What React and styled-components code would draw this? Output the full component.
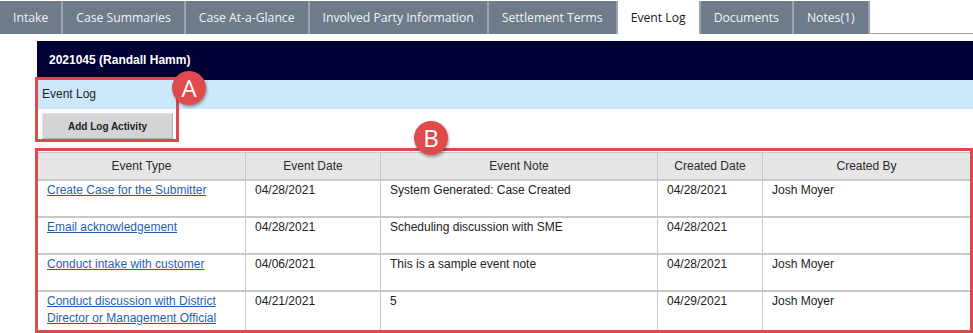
import React from 'react';
import styled, { createGlobalStyle } from 'styled-components';

const GlobalStyle = createGlobalStyle`
  body {
    margin: 0;
    background: #fff;
    font-family: "Liberation Sans", Arial, sans-serif;
  }
`;

const Page = styled.div`
  position: relative;
  width: 973px;
  height: 333px;
  overflow: hidden;
`;

const TabBar = styled.div`
  display: flex;
  height: 33px;
  border-bottom: 1px solid #a3a3a3;
`;

const Tab = styled.div`
  display: flex;
  align-items: center;
  justify-content: center;
  padding: 0 13px;
  margin-top: 1px;
  margin-bottom: -1px;
  border-right: 2px solid #9aa3ae;
  background: ${({ active }) => (active ? '#fff' : '#6e7b8b')};
  color: ${({ active }) => (active ? '#1a1a1a' : '#f1f3f5')};
  font-family: "Open Sans", "Noto Sans", sans-serif;
  font-size: 12.2px;
  white-space: nowrap;
`;

const Content = styled.div`
  padding: 7px 0 0 37px;
`;

const CaseHeader = styled.div`
  height: 39px;
  line-height: 39px;
  padding-left: 12px;
  background: #000034;
  color: #fff;
  font-weight: bold;
  font-size: 12px;
`;

const SectionBar = styled.div`
  height: 29px;
  line-height: 28px;
  padding-left: 5px;
  background: #cce9fb;
  color: #222;
  font-size: 12px;
`;

const ButtonRow = styled.div`
  padding: 4px 0 0 5px;
`;

const Button = styled.button`
  width: 131px;
  height: 26px;
  background: #d4d4d4;
  border: 1px solid #b5b5b5;
  border-top-color: #e2e2e2;
  border-left-color: #e2e2e2;
  font-family: "Liberation Sans", Arial, sans-serif;
  font-weight: bold;
  font-size: 10px;
  color: #222;
`;

const Table = styled.table`
  margin-top: 13px;
  width: 933px;
  border-collapse: collapse;
  table-layout: fixed;
  font-size: 12px;
  color: #222;
`;

const Th = styled.th`
  height: 26px;
  background: #e6e6e6;
  border: 1px solid #c8c8c8;
  font-weight: normal;
  color: #2a2a2a;
  text-align: center;
  padding: 0;
`;

const Td = styled.td`
  height: ${({ tall }) => (tall ? '38px' : '34px')};
  border-left: 1px solid #c8c8c8;
  border-right: 1px solid #c8c8c8;
  border-top: 2px solid #c8c8c8;
  vertical-align: top;
  padding: 1px 9px 0;
  line-height: 17px;
`;

const Link = styled.a`
  color: #1f5fb0;
  text-decoration: underline;
`;

const Marker = styled.div`
  position: absolute;
  left: ${({ x }) => x}px;
  top: ${({ y }) => y}px;
  width: ${({ w }) => w}px;
  height: ${({ h }) => h}px;
  border: 3px solid #dc4a4e;
  box-sizing: border-box;
  pointer-events: none;
`;

const Badge = styled.div`
  position: absolute;
  left: ${({ x }) => x - 17}px;
  top: ${({ y }) => y - 17}px;
  width: 34px;
  height: 34px;
  border-radius: 50%;
  background: #df4a4c;
  box-shadow: 1px 2px 3px rgba(0, 0, 0, 0.35);
  color: #fff;
  font-family: "Open Sans", "Noto Sans", sans-serif;
  font-size: 24px;
  line-height: 34px;
  text-align: center;
`;

const tabs = [
  'Intake',
  'Case Summaries',
  'Case At-a-Glance',
  'Involved Party Information',
  'Settlement Terms',
  'Event Log',
  'Documents',
  'Notes(1)',
];

const columns = [
  { title: 'Event Type', width: 208 },
  { title: 'Event Date', width: 135 },
  { title: 'Event Note', width: 277 },
  { title: 'Created Date', width: 105 },
  { title: 'Created By', width: 208 },
];

const rows = [
  ['Create Case for the Submitter', '04/28/2021', 'System Generated: Case Created', '04/28/2021', 'Josh Moyer'],
  ['Email acknowledgement', '04/28/2021', 'Scheduling discussion with SME', '04/28/2021', ''],
  ['Conduct intake with customer', '04/06/2021', 'This is a sample event note', '04/28/2021', 'Josh Moyer'],
  ['Conduct discussion with District Director or Management Official', '04/21/2021', '5', '04/29/2021', 'Josh Moyer'],
];

export default function App() {
  return (
    <Page>
      <GlobalStyle />
      <TabBar>
        {tabs.map((t) => (
          <Tab key={t} active={t === 'Event Log'}>{t}</Tab>
        ))}
      </TabBar>
      <Content>
        <CaseHeader>2021045 (Randall Hamm)</CaseHeader>
        <SectionBar>Event Log</SectionBar>
        <ButtonRow>
          <Button type="button">Add Log Activity</Button>
        </ButtonRow>
        <Table>
          <colgroup>
            {columns.map((c) => (
              <col key={c.title} style={{ width: c.width }} />
            ))}
          </colgroup>
          <thead>
            <tr>
              {columns.map((c) => (
                <Th key={c.title}>{c.title}</Th>
              ))}
            </tr>
          </thead>
          <tbody>
            {rows.map((r, i) => (
              <tr key={i}>
                {r.map((cell, j) => (
                  <Td key={j} tall={i === rows.length - 1}>
                    {j === 0 ? <Link href="#">{cell}</Link> : cell}
                  </Td>
                ))}
              </tr>
            ))}
          </tbody>
        </Table>
      </Content>
      <Marker x={35} y={77} w={144} h={65} />
      <Marker x={35} y={148} w={938} h={185} />
      <Badge x={189} y={88}>A</Badge>
      <Badge x={431} y={138}>B</Badge>
    </Page>
  );
}
